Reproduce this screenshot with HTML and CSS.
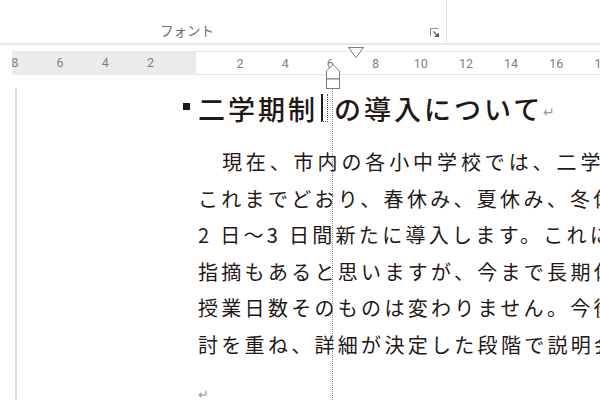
FILE: index.html
```html
<!DOCTYPE html>
<html lang="ja">
<head>
<meta charset="utf-8">
<link rel="stylesheet" href="styles.css">
</head>
<body>
<div class="screen">
  <header class="ribbon">
    <div class="group">
      <span class="group-label">フォント</span>
      <svg class="launcher" width="11" height="11" viewBox="0 0 11 11">
        <path d="M1.5 9 V1.5 H9" fill="none" stroke="#8a8a8a" stroke-width="1"/>
        <path d="M4.5 4.5 L8 8" stroke="#555" stroke-width="1.3"/>
        <polygon points="10,10 10,5.5 5.5,10" fill="#555"/>
      </svg>
    </div>
  </header>

  <div class="ruler">
    <div class="ruler-margin">
      <span class="tick">8</span><span class="tick">6</span><span class="tick">4</span><span class="tick">2</span>
    </div>
    <div class="ruler-body">
      <span class="tick">2</span><span class="tick">4</span><span class="tick">6</span><span class="tick">8</span><span class="tick">10</span><span class="tick">12</span><span class="tick">14</span><span class="tick">16</span><span class="tick">18</span>
    </div>
    <svg class="marker-first" width="16" height="12" viewBox="0 0 16 12">
      <polygon points="0.5,0.5 15.5,0.5 8,10.5" fill="#fff" stroke="#7a7a7a" stroke-width="1"/>
    </svg>
    <svg class="marker-hang" width="14" height="25" viewBox="0 0 14 25">
      <polygon points="7,0.5 13.5,7 13.5,15 0.5,15 0.5,7" fill="#fff" stroke="#7a7a7a" stroke-width="1"/>
      <rect x="0.5" y="15" width="13" height="9.5" fill="#fff" stroke="#7a7a7a" stroke-width="1"/>
    </svg>
  </div>

  <main class="doc">
    <div class="page">
      <h1 class="heading">
        <span class="bullet"></span><span class="h-text">二学期制</span><span class="cursor"></span><span class="h-text">の導入について</span><span class="para-mark">↵</span>
      </h1>
      <div class="body">
        <p class="line line-first">　現在、市内の各小中学校では、二学期制の導入を</p>
        <p class="line">これまでどおり、春休み、夏休み、冬休みを設け</p>
        <p class="line">2 日～3 日間新たに導入します。これにより</p>
        <p class="line">指摘もあると思いますが、今まで長期休業前</p>
        <p class="line">授業日数そのものは変わりません。今後、</p>
        <p class="line">討を重ね、詳細が決定した段階で説明会を</p>
        <p class="line mark-line">↵</p>
      </div>
    </div>
    <div class="guide"></div>
  </main>
</div>
</body>
</html>
```

FILE: styles.css
```css
html, body {
  margin: 0;
  padding: 0;
  background: #fff;
}

.screen {
  position: relative;
  width: 600px;
  height: 400px;
  overflow: hidden;
  background: #fff;
  font-family: "Noto Sans CJK JP", "Noto Sans", sans-serif;
}

/* ribbon */
.ribbon {
  height: 43px;
  border-bottom: 2px solid #e6e6e6;
}

.group {
  width: 447px;
  height: 42px;
  border-right: 1px solid #e3e3e3;
  display: flex;
  align-items: flex-end;
  box-sizing: border-box;
  padding-bottom: 3px;
}

.group-label {
  margin-left: 160px;
  font-size: 13.5px;
  line-height: 18px;
  color: #6e6e6e;
}

.launcher {
  margin-left: auto;
  margin-right: 6px;
  margin-bottom: 1px;
}

/* ruler */
.ruler {
  margin-top: 6px;
  height: 24px;
  display: flex;
  font-family: Roboto, "Liberation Sans", sans-serif;
  font-size: 12.5px;
  color: #808080;
}

.ruler-margin {
  margin-left: 12px;
  width: 184px;
  flex: none;
  background: #ebebeb;
  display: flex;
  justify-content: flex-end;
  padding-right: 23px;
  box-sizing: border-box;
  overflow: hidden;
}

.ruler-body {
  flex: 1;
  display: flex;
  padding-left: 21.4px;
  border-top: 1px solid #e4e4e4;
  border-bottom: 1px solid #e4e4e4;
  box-sizing: border-box;
  overflow: hidden;
}

.tick {
  flex: none;
  width: 45.2px;
  text-align: center;
  line-height: 23px;
}

.ruler-margin .tick {
  line-height: 24px;
}

.marker-first {
  position: absolute;
  left: 348px;
  top: 47px;
}

.marker-hang {
  position: absolute;
  left: 326px;
  top: 64px;
}

/* document */
.doc {
  position: relative;
  margin-top: 13px;
  height: 312px;
}

.page {
  margin-left: 15px;
  border-left: 2px solid #d9d9d9;
  padding-left: 166px;
  height: 312px;
  color: #231815;
}

.heading {
  margin: 2px 0 0;
  height: 40px;
  display: flex;
  align-items: center;
  font-size: 27px;
  font-weight: 500;
  letter-spacing: 3px;
  white-space: nowrap;
}

.bullet {
  flex: none;
  width: 7px;
  height: 7px;
  background: #231815;
  margin-right: 8px;
  margin-bottom: 4px;
}

.cursor {
  flex: none;
  width: 4px;
  height: 27px;
  margin: 0 6px 0 3px;
  border-left: 2px solid #231815;
  border-right: 1px dotted #555;
  border-bottom: 1px dotted #555;
}

.para-mark {
  font-size: 14px;
  color: #9a9a9a;
  letter-spacing: 0;
  margin-left: 0;
  margin-top: 6px;
}

.body {
  margin-top: 16px;
  margin-left: 15px;
  font-size: 20px;
  line-height: 36.6px;
  letter-spacing: 3.3px;
  white-space: nowrap;
}

.line {
  margin: 0;
}

.line-first {
  letter-spacing: 3.9px;
}

.mark-line {
  font-size: 13px;
  color: #9a9a9a;
  padding-top: 12px;
}

.guide {
  position: absolute;
  left: 332px;
  top: 0;
  height: 312px;
  border-left: 1px dotted #8a8a8a;
}
```
